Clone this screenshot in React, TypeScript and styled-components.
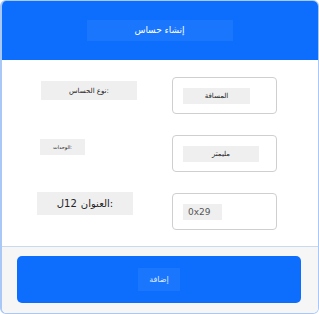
import React from "react";
import styled, { createGlobalStyle } from "styled-components";

const GlobalStyle = createGlobalStyle`
  html, body {
    margin: 0;
    padding: 0;
    background: #ffffff;
  }
  * {
    box-sizing: border-box;
  }
`;

type BoxProps = {
  width: number;
  height: number;
  fontSize: number;
};

type LabelProps = BoxProps & {
  indent: number;
  lift: number;
};

const Frame = styled.div`
  width: 319px;
  height: 314px;
  display: flex;
  flex-direction: column;
  border: 1px solid #a9c8f6;
  border-left-width: 2px;
  border-radius: 6px;
  overflow: hidden;
  font-family: "DejaVu Sans", "Noto Sans", sans-serif;
  background: #ffffff;
`;

const Header = styled.div`
  height: 60px;
  background: #0d6efd;
  display: flex;
  align-items: center;
  justify-content: center;
  margin: -1px -1px 0 -2px;
`;

const Title = styled.div`
  width: 146px;
  height: 21px;
  background: #1a76fd;
  color: #ffffff;
  font-size: 9px;
  display: flex;
  align-items: center;
  justify-content: center;
`;

const Body = styled.div`
  flex: 1;
  display: flex;
  flex-direction: column;
  gap: 21px;
  padding: 17px 0 0 0;
  border-bottom: 1px solid #c9d9ee;
`;

const Row = styled.div`
  display: flex;
  align-items: flex-start;
`;

const LabelCell = styled.div`
  width: 170px;
  display: flex;
`;

const Label = styled.div<LabelProps>`
  margin-left: ${(p) => p.indent}px;
  margin-top: ${(p) => p.lift}px;
  width: ${(p) => p.width}px;
  height: ${(p) => p.height}px;
  background: #efefef;
  color: #222;
  font-size: ${(p) => p.fontSize}px;
  display: flex;
  align-items: center;
  justify-content: center;
  direction: ltr;
`;

const Piece = styled.span<{ space?: number }>`
  margin-right: ${(p) => p.space ?? 0}px;
`;

const Input = styled.div`
  width: 105px;
  height: 37px;
  border: 1px solid #cfcfcf;
  border-radius: 4px;
  padding: 10px 0 0 10px;
`;

const Value = styled.div<BoxProps & { align: string; color: string }>`
  width: ${(p) => p.width}px;
  height: ${(p) => p.height}px;
  background: #efefef;
  color: ${(p) => p.color};
  font-size: ${(p) => p.fontSize}px;
  display: flex;
  align-items: center;
  justify-content: ${(p) => p.align};
  padding: 0 5px;
`;

const Footer = styled.div`
  height: 66px;
  background: #f6f6f6;
  padding: 9px 17px 9px 15px;
`;

const AddButton = styled.button`
  width: 100%;
  height: 47px;
  border: none;
  border-radius: 5px;
  background: #0d6efd;
  display: flex;
  align-items: center;
  justify-content: center;
  padding: 0;
  font-family: inherit;
`;

const ButtonLabel = styled.span`
  width: 42px;
  height: 23px;
  background: #1a76fd;
  color: #dfeaff;
  font-size: 8px;
  display: flex;
  align-items: center;
  justify-content: center;
`;

export default function App() {
  return (
    <>
      <GlobalStyle />
      <Frame>
        <Header>
          <Title>إنشاء حساس</Title>
        </Header>
        <Body>
          <Row>
            <LabelCell>
              <Label indent={39} lift={4} width={96} height={19} fontSize={7}>
                <Piece>نوع الحساس</Piece>
                <Piece>:</Piece>
              </Label>
            </LabelCell>
            <Input>
              <Value width={67} height={16} fontSize={7} align="center" color="#222">
                المسافة
              </Value>
            </Input>
          </Row>
          <Row>
            <LabelCell>
              <Label indent={38} lift={4} width={45} height={16} fontSize={5}>
                <Piece>الوحدات</Piece>
                <Piece>:</Piece>
              </Label>
            </LabelCell>
            <Input>
              <Value width={76} height={16} fontSize={7} align="center" color="#222">
                مليمتر
              </Value>
            </Input>
          </Row>
          <Row>
            <LabelCell>
              <Label indent={35} lift={-1} width={96} height={23} fontSize={10}>
                <Piece>ل</Piece>
                <Piece space={4}>12</Piece>
                <Piece>العنوان</Piece>
                <Piece>:</Piece>
              </Label>
            </LabelCell>
            <Input>
              <Value width={39} height={16} fontSize={9} align="flex-start" color="#555">
                0x29
              </Value>
            </Input>
          </Row>
        </Body>
        <Footer>
          <AddButton>
            <ButtonLabel>إضافة</ButtonLabel>
          </AddButton>
        </Footer>
      </Frame>
    </>
  );
}
